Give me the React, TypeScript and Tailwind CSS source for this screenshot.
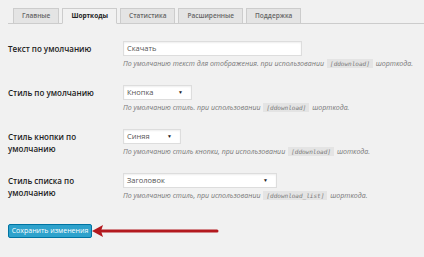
import React from "react";

const tabs = ["Главные", "Шорткоды", "Статистика", "Расширенные", "Поддержка"];

interface RowProps {
  label: React.ReactNode;
  field: React.ReactNode;
  code: string;
  before: string;
  after: string;
}

const Code: React.FC<{ text: string }> = ({ text }) => (
  <span className="mx-[3px] bg-[#e4e4e4] px-[3px] py-[1px] font-['DejaVu_Sans_Mono',monospace] text-[6px] not-italic text-[#777]">
    <i>{text}</i>
  </span>
);

const Select: React.FC<{ value: string; width: string }> = ({ value, width }) => (
  <div
    className={`flex h-[15px] items-center justify-between border border-[#ddd] bg-white pl-[3px] pr-[8px] shadow-[inset_0_1px_2px_rgba(0,0,0,0.07)] ${width}`}
  >
    <span className="text-[7.5px] text-[#555]">{value}</span>
    <span className="text-[5px] text-[#222]">▼</span>
  </div>
);

const Row: React.FC<RowProps> = ({ label, field, code, before, after }) => (
  <div className="flex">
    <div className="w-[115px] pt-[2px] text-[8px] leading-[12px] font-semibold text-[#222]">{label}</div>
    <div className="flex flex-col">
      {field}
      <p className="mt-[3px] text-[7px] leading-[10px] italic text-[#777]">
        {before}
        <Code text={code} />
        {after}
      </p>
    </div>
  </div>
);

const App: React.FC = () => {
  return (
    <div className="h-[257px] w-[424px] overflow-hidden bg-[#f1f1f1] font-['Open_Sans',sans-serif]">
      <div className="ml-[8px] flex gap-[3px] border-b border-[#ccc] pt-[8px] pl-[5px]">
        {tabs.map((t, i) => (
          <div
            key={t}
            className={
              i === 1
                ? "-mb-px flex h-[16px] items-center border border-[#ccc] border-b-[#f1f1f1] bg-[#f1f1f1] px-[8px] text-[6.5px] font-bold text-[#222]"
                : "-mb-px flex h-[16px] items-center border border-[#ccc] bg-[#e4e4e4] px-[8px] text-[6.5px] font-semibold text-[#666]"
            }
          >
            {t}
          </div>
        ))}
      </div>

      <div className="mt-[17px] flex flex-col gap-[16px] pl-[8px]">
        <Row
          label="Текст по умолчанию"
          field={
            <div className="flex h-[15px] w-[179px] items-center border border-[#ddd] bg-white pl-[3px] shadow-[inset_0_1px_2px_rgba(0,0,0,0.07)]">
              <span className="text-[7.5px] text-[#555]">Скачать</span>
            </div>
          }
          before="По умолчанию текст для отображения. при использовании"
          code="[ddownload]"
          after="шорткода."
        />
        <Row
          label="Стиль по умолчанию"
          field={<Select value="Кнопка" width="w-[69px]" />}
          before="По умолчанию стиль. при использовании"
          code="[ddownload]"
          after="шорткода."
        />
        <Row
          label={
            <>
              Стиль кнопки по
              <br />
              умолчанию
            </>
          }
          field={<Select value="Синяя" width="w-[58px]" />}
          before="По умолчанию стиль кнопки, при использовании"
          code="[ddownload]"
          after="шоткода."
        />
        <Row
          label={
            <>
              Стиль списка по
              <br />
              умолчанию
            </>
          }
          field={<Select value="Заголовок" width="w-[154px]" />}
          before="По умолчанию стиль, при использовании"
          code="[ddownload_list]"
          after="шорткода."
        />
      </div>

      <div className="mt-[23px] flex items-center pl-[8px]">
        <button className="flex h-[14px] w-[84px] items-center justify-center rounded-[2px] border border-[#0074a2] bg-[#2ea2cc] text-[7px] text-white">
          Сохранить изменения
        </button>
        <svg width="128" height="14" viewBox="0 0 128 14" className="-ml-[1px]">
          <line x1="9" y1="7" x2="126" y2="7" stroke="#b3191e" strokeWidth="3" strokeLinecap="round" />
          <polygon points="1,7 12,1 10,7 12,13" fill="#b3191e" />
        </svg>
      </div>
    </div>
  );
};

export default App;
